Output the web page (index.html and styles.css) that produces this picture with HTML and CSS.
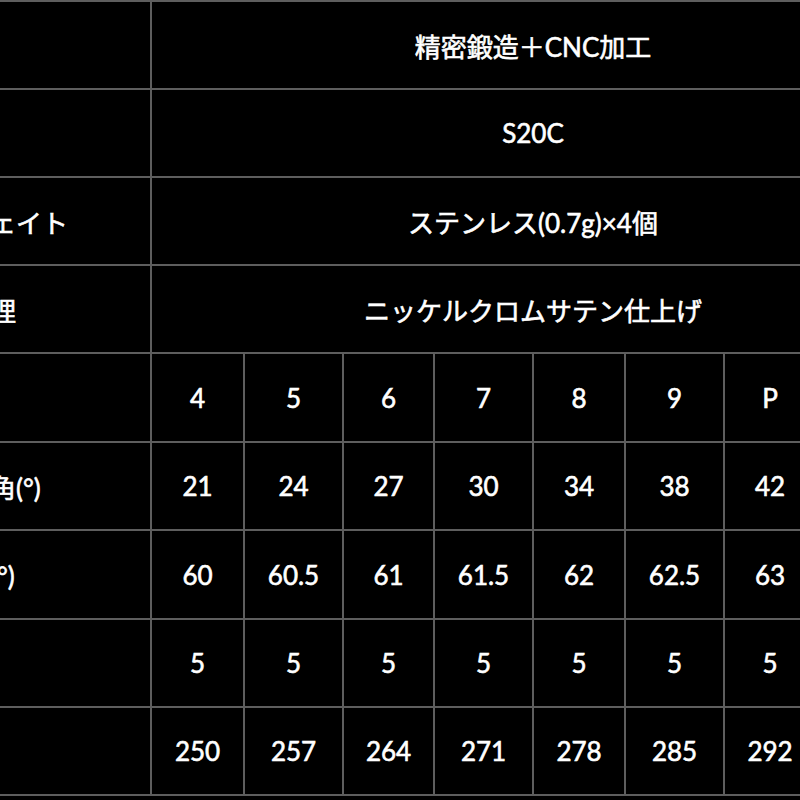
FILE: index.html
```html
<!DOCTYPE html>
<html lang="ja">
<head>
<meta charset="utf-8">
<title>スペック</title>
<link rel="stylesheet" href="styles.css">
</head>
<body>
<div class="spec">
  <div class="cell label">製法</div>
  <div class="cell span">精密鍛造＋CNC加工</div>

  <div class="cell label">素材</div>
  <div class="cell span">S20C</div>

  <div class="cell label">交換ウェイト</div>
  <div class="cell span">ステンレス(0.7g)×4個</div>

  <div class="cell label">表面処理</div>
  <div class="cell span">ニッケルクロムサテン仕上げ</div>

  <div class="cell label tall">番手</div>
  <div class="cell tall">4</div><div class="cell tall">5</div><div class="cell tall">6</div><div class="cell tall">7</div><div class="cell tall">8</div><div class="cell tall">9</div><div class="cell tall">P</div><div class="cell tall">A</div>

  <div class="cell label">ロフト角(°)</div>
  <div class="cell">21</div><div class="cell">24</div><div class="cell">27</div><div class="cell">30</div><div class="cell">34</div><div class="cell">38</div><div class="cell">42</div><div class="cell">47</div>

  <div class="cell label tall">ライ角(°)</div>
  <div class="cell tall">60</div><div class="cell tall">60.5</div><div class="cell tall">61</div><div class="cell tall">61.5</div><div class="cell tall">62</div><div class="cell tall">62.5</div><div class="cell tall">63</div><div class="cell tall">63.5</div>

  <div class="cell label">FP</div>
  <div class="cell">5</div><div class="cell">5</div><div class="cell">5</div><div class="cell">5</div><div class="cell">5</div><div class="cell">5</div><div class="cell">5</div><div class="cell">5</div>

  <div class="cell label">重量(g)</div>
  <div class="cell">250</div><div class="cell">257</div><div class="cell">264</div><div class="cell">271</div><div class="cell">278</div><div class="cell">285</div><div class="cell">292</div><div class="cell">299</div>
</div>
</body>
</html>
```

FILE: styles.css
```css
html, body {
  margin: 0;
  padding: 0;
  background: #000;
  overflow: hidden;
}

.spec {
  display: grid;
  grid-template-columns: 242px 93px 99px 91px 99px 92px 99px 92px 99px;
  width: max-content;
  margin-left: -90px;
  border-top: 2px solid #5e5e5e;
  font-family: Lato, "Noto Sans CJK JP", sans-serif;
  font-size: 26px;
  color: #fff;
  -webkit-text-stroke: 0.6px #fff;
}

.cell {
  box-sizing: border-box;
  height: 88px;
  display: flex;
  align-items: center;
  justify-content: center;
  border-right: 2px solid #5e5e5e;
  border-bottom: 2px solid #5e5e5e;
  white-space: nowrap;
}

.cell.tall {
  height: 89px;
}

.label {
  justify-content: flex-start;
  padding-left: 2px;
}

.span {
  grid-column: span 8;
}
```
